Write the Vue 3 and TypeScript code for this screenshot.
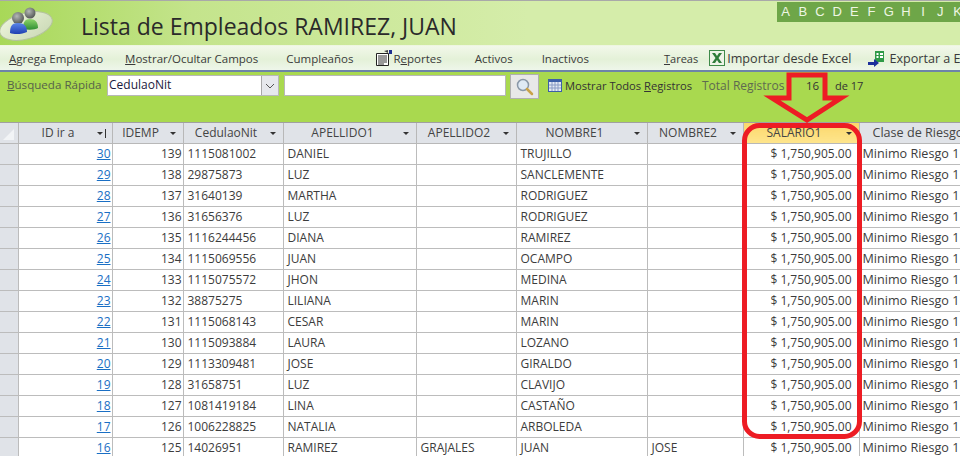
<script setup lang="ts">
interface Empleado {
  id: number
  idemp: number
  cedula: string
  apellido1: string
  apellido2: string
  nombre1: string
  nombre2: string
}

const letters = ['A', 'B', 'C', 'D', 'E', 'F', 'G', 'H', 'I', 'J', 'K']

const columns = [
  { label: 'ID ir a', width: 94, sorted: true },
  { label: 'IDEMP', width: 71 },
  { label: 'CedulaoNit', width: 100 },
  { label: 'APELLIDO1', width: 133 },
  { label: 'APELLIDO2', width: 100 },
  { label: 'NOMBRE1', width: 131 },
  { label: 'NOMBRE2', width: 96 },
  { label: 'SALARIO1', width: 116, active: true },
  { label: 'Clase de Riesgo', width: 130 },
]

const empleados: Empleado[] = [
  { id: 30, idemp: 139, cedula: '1115081002', apellido1: 'DANIEL', apellido2: '', nombre1: 'TRUJILLO', nombre2: '' },
  { id: 29, idemp: 138, cedula: '29875873', apellido1: 'LUZ', apellido2: '', nombre1: 'SANCLEMENTE', nombre2: '' },
  { id: 28, idemp: 137, cedula: '31640139', apellido1: 'MARTHA', apellido2: '', nombre1: 'RODRIGUEZ', nombre2: '' },
  { id: 27, idemp: 136, cedula: '31656376', apellido1: 'LUZ', apellido2: '', nombre1: 'RODRIGUEZ', nombre2: '' },
  { id: 26, idemp: 135, cedula: '1116244456', apellido1: 'DIANA', apellido2: '', nombre1: 'RAMIREZ', nombre2: '' },
  { id: 25, idemp: 134, cedula: '1115069556', apellido1: 'JUAN', apellido2: '', nombre1: 'OCAMPO', nombre2: '' },
  { id: 24, idemp: 133, cedula: '1115075572', apellido1: 'JHON', apellido2: '', nombre1: 'MEDINA', nombre2: '' },
  { id: 23, idemp: 132, cedula: '38875275', apellido1: 'LILIANA', apellido2: '', nombre1: 'MARIN', nombre2: '' },
  { id: 22, idemp: 131, cedula: '1115068143', apellido1: 'CESAR', apellido2: '', nombre1: 'MARIN', nombre2: '' },
  { id: 21, idemp: 130, cedula: '1115093884', apellido1: 'LAURA', apellido2: '', nombre1: 'LOZANO', nombre2: '' },
  { id: 20, idemp: 129, cedula: '1113309481', apellido1: 'JOSE', apellido2: '', nombre1: 'GIRALDO', nombre2: '' },
  { id: 19, idemp: 128, cedula: '31658751', apellido1: 'LUZ', apellido2: '', nombre1: 'CLAVIJO', nombre2: '' },
  { id: 18, idemp: 127, cedula: '1081419184', apellido1: 'LINA', apellido2: '', nombre1: 'CASTAÑO', nombre2: '' },
  { id: 17, idemp: 126, cedula: '1006228825', apellido1: 'NATALIA', apellido2: '', nombre1: 'ARBOLEDA', nombre2: '' },
  { id: 16, idemp: 125, cedula: '14026951', apellido1: 'RAMIREZ', apellido2: 'GRAJALES', nombre1: 'JUAN', nombre2: 'JOSE' },
]
</script>

<template>
  <div class="page">
    <header class="title-bar">
      <svg class="logo" width="54" height="42" viewBox="0 0 54 42">
        <defs>
          <linearGradient id="disc" x1="0" y1="0" x2="1" y2="1">
            <stop offset="0" stop-color="#eef5dd" />
            <stop offset="1" stop-color="#c9d8b4" />
          </linearGradient>
          <radialGradient id="head" cx="0.4" cy="0.35" r="0.7">
            <stop offset="0" stop-color="#b4b8b6" />
            <stop offset="1" stop-color="#4e5250" />
          </radialGradient>
          <linearGradient id="blue" x1="0" y1="0" x2="0" y2="1">
            <stop offset="0" stop-color="#5a86ea" />
            <stop offset="1" stop-color="#1f3fb0" />
          </linearGradient>
          <linearGradient id="green" x1="0" y1="0" x2="0" y2="1">
            <stop offset="0" stop-color="#8ed46a" />
            <stop offset="1" stop-color="#2f8f34" />
          </linearGradient>
        </defs>
        <ellipse cx="26" cy="23" rx="27" ry="13" transform="rotate(-15 26 23)" fill="url(#disc)" stroke="#b4c29e" />
        <circle cx="30" cy="10" r="5.500" fill="url(#head)" />
        <path d="M23 26c0-7 2-10 7-10s8 3 8 9c-3 2-10 2-15 1z" fill="url(#green)" />
        <circle cx="18" cy="15" r="6" fill="url(#head)" />
        <path d="M10 30c0-7 2-10 8-10s9 3 9 9c-4 2-12 3-17 1z" fill="url(#blue)" />
      </svg>
      <h1>Lista de Empleados RAMIREZ, JUAN</h1>
      <div class="letters">
        <span v-for="l in letters" :key="l">{{ l }}</span>
      </div>
    </header>

    <nav class="menu">
      <span class="m1"><u>A</u>grega Empleado</span>
      <span class="m2"><u>M</u>ostrar/Ocultar Campos</span>
      <span class="m3">Cumpleaños</span>
      <span class="m4">
        <svg width="16" height="16" viewBox="0 0 16 16">
          <path d="M.5 3.500h12v12H.5z" fill="#fff" stroke="#222" />
          <path d="M2 6h9M2 8h9M2 10h9M2 12h9M2 14h6" stroke="#333" />
          <path d="M13 0h3v4h-3z" fill="#1f2f8f" />
          <path d="M8 1l4-1v3z" fill="#444" />
        </svg>
        <span>R<u>e</u>portes</span>
      </span>
      <span class="m5">Activos</span>
      <span class="m6">Inactivos</span>
      <span class="m7"><u>T</u>areas</span>
      <span class="m8">
        <svg width="16" height="16" viewBox="0 0 16 16">
          <rect x="0.5" y="0.5" width="15" height="15" fill="#eef4e8" stroke="#3f8a4a" />
          <path d="M3 3h3l2 3 2-3h3l-3.500 5 3.500 5h-3l-2-3-2 3H3l3.500-5z" fill="#2f7d3b" />
        </svg>
        <span>Importar desde Excel</span>
      </span>
      <span class="m9">
        <svg width="17" height="17" viewBox="0 0 17 17">
          <path d="M7 1h9v11H7z" fill="#2f9a47" />
          <path d="M8.500 3h2v2h-2zM12 3h3v2h-3zM8.500 6h2v2h-2zM12 6h3v2h-3z" fill="#fff" />
          <path d="M0 12h6V9l5 4-5 4v-2H0z" fill="#1d2f9c" />
        </svg>
        <span>Exportar a Excel</span>
      </span>
    </nav>

    <section class="search">
      <label class="search-label"><u>B</u>úsqueda Rápida</label>
      <div class="combo">
        <span>CedulaoNit</span>
        <i class="combo-btn">
          <svg width="10" height="6" viewBox="0 0 10 6"><path d="M1 1l4 4 4-4" fill="none" stroke="#555" /></svg>
        </i>
      </div>
      <div class="search-input"></div>
      <button class="search-btn">
        <svg width="20" height="20" viewBox="0 0 20 20">
          <circle cx="8" cy="8" r="5.500" fill="#dfeaf5" stroke="#8a98a8" stroke-width="1.500" />
          <path d="M12 12l5 5" stroke="#c9a24a" stroke-width="2.500" stroke-linecap="round" />
        </svg>
      </button>
      <svg class="cal" width="14" height="13" viewBox="0 0 14 13">
        <rect width="14" height="13" fill="#3d5fa8" />
        <rect x="1" y="3" width="12" height="9" fill="#e4e9f4" />
        <path d="M1 6h12M1 9h12M4 3v9M7 3v9M10 3v9" stroke="#8a9bc4" />
      </svg>
      <span class="show-all">Mostrar Todos <u>R</u>egistros</span>
      <span class="total">Total Registros</span>
      <span class="count">16</span>
      <span class="of">de 17</span>
    </section>

    <table class="grid">
      <colgroup>
        <col style="width: 18px" />
        <col v-for="c in columns" :key="c.label" :style="{ width: c.width + 'px' }" />
      </colgroup>
      <thead>
        <tr>
          <th class="corner"><span class="tri"></span></th>
          <th v-for="c in columns" :key="c.label" :class="{ active: c.active, wide: c.label === 'Clase de Riesgo' }">
            <span class="th-label">{{ c.label }}</span>
            <i v-if="c.label !== 'Clase de Riesgo'" class="arrow" :class="{ sorted: c.sorted }"></i>
          </th>
        </tr>
      </thead>
      <tbody>
        <tr v-for="e in empleados" :key="e.id">
          <td class="sel"></td>
          <td class="num"><a>{{ e.id }}</a></td>
          <td class="num">{{ e.idemp }}</td>
          <td>{{ e.cedula }}</td>
          <td>{{ e.apellido1 }}</td>
          <td>{{ e.apellido2 }}</td>
          <td>{{ e.nombre1 }}</td>
          <td>{{ e.nombre2 }}</td>
          <td class="num money">$ 1,750,905.00</td>
          <td class="clip">Minimo Riesgo 1</td>
        </tr>
      </tbody>
    </table>

    <!-- marcas rojas pintadas encima de la captura -->
    <svg class="marks" width="960" height="456" viewBox="0 0 960 456">
      <path
        d="M789 75H825V98H841L807 120L772 98H789Z"
        fill="none"
        stroke="#ed1c24"
        stroke-width="5"
      />
      <rect x="744.500" y="125.500" width="115" height="311" rx="15" fill="none" stroke="#ed1c24" stroke-width="5" />
    </svg>
  </div>
</template>

<style scoped>
.page {
  position: relative;
  width: 960px;
  height: 456px;
  overflow: hidden;
  background: #fff;
  font-family: "Open Sans", "Noto Sans", sans-serif;
  font-size: 12px;
  color: #444;
}

.title-bar {
  height: 45px;
  box-sizing: border-box;
  border-top: 1px solid #a9a9a9;
  display: flex;
  align-items: flex-start;
  background: linear-gradient(90deg, #a8d858 0%, #c4e48c 20%, #d5edaa 55%, #d5edaa 100%);
}

.logo {
  margin-top: 2px;
  flex: none;
}

.title-bar h1 {
  margin: 8px 0 0 27px;
  font-size: 23px;
  font-weight: 400;
  line-height: 34px;
  color: #2a2a2a;
  white-space: nowrap;
}

.letters {
  margin: 1px 0 0 auto;
  width: 183px;
  height: 20px;
  flex: none;
  display: flex;
  background: #6ea648;
  color: #eef6e4;
  overflow: hidden;
  font-family: "Liberation Sans", Arial, sans-serif;
}

.letters span {
  width: 17.200px;
  flex: none;
  text-align: center;
  line-height: 20px;
  font-size: 13px;
}

.menu {
  height: 27px;
  display: flex;
  align-items: center;
  white-space: nowrap;
  border-top: 1px solid #eef6e0;
  border-bottom: 2px solid #6d84a8;
  box-sizing: border-box;
  background: linear-gradient(180deg, #f2f8ea 0%, #e4f1d8 55%, #eef6ea 100%);
  overflow: hidden;
  color: #3a3a3a;
  font-size: 11.500px;
}

.menu > span {
  display: inline-flex;
  align-items: center;
  flex: none;
}

.m1 { margin-left: 9px; }
.m2 { margin-left: 22px; }
.m3 { margin-left: 28px; }
.m4 { margin-left: 23px; gap: 1px; }
.m5 { margin-left: 33px; }
.m6 { margin-left: 29px; }
.m7 { margin-left: 75px; font-size: 11px; }
.m8 { margin-left: 11px; gap: 2px; font-size: 12.600px; }
.m9 { margin-left: 17px; gap: 4px; font-size: 12.600px; }

.search {
  height: 51px;
  box-sizing: border-box;
  padding-top: 3px;
  display: flex;
  align-items: flex-start;
  background: #a9d94f;
  border-bottom: 1px solid #a0a0a0;
  white-space: nowrap;
}

.search-label {
  margin: 2px 0 0 7px;
  width: 100px;
  flex: none;
  color: #56624a;
  font-size: 11.600px;
}

.combo {
  width: 172px;
  height: 21px;
  flex: none;
  box-sizing: border-box;
  background: #fff;
  border: 1px solid #b8b8b8;
  position: relative;
  color: #1a1a40;
  padding-left: 1px;
  line-height: 17px;
}

.combo-btn {
  position: absolute;
  right: 0;
  top: 0;
  width: 16px;
  height: 19px;
  background: #e6e8ec;
  border-left: 1px solid #a8a8a8;
  display: flex;
  align-items: center;
  justify-content: center;
}

.search-input {
  margin-left: 5px;
  width: 222px;
  height: 21px;
  flex: none;
  box-sizing: border-box;
  background: #fff;
  border: 1px solid #b8b8b8;
}

.search-btn {
  margin: -1px 0 0 4px;
  width: 29px;
  height: 25px;
  flex: none;
  padding: 0;
  box-sizing: border-box;
  background: #e8e8e8;
  border: 1px solid #b0b0b0;
  display: flex;
  align-items: center;
  justify-content: center;
}

.cal {
  margin: 4px 0 0 9px;
  flex: none;
}

.show-all {
  margin: 3px 0 0 3px;
  width: 127px;
  flex: none;
  color: #333;
  font-size: 11.200px;
}

.total {
  margin: 2px 0 0 10px;
  width: 85px;
  flex: none;
  color: #5e6a50;
}

.count {
  margin: 3px 0 0 19px;
  width: 29px;
  flex: none;
  color: #333;
  font-size: 11.500px;
}

.of {
  margin: 3px 0 0 0;
  color: #333;
  font-size: 11px;
}

.grid {
  border-collapse: collapse;
  table-layout: fixed;
  width: 989px;
  line-height: 20px;
}

.grid th {
  height: 19px;
  padding: 0 14px 0 0;
  position: relative;
  background: #e0e3e8;
  border: 1px solid #b8b8b8;
  border-top: 0;
  font-weight: 400;
  text-align: center;
  color: #444;
  white-space: nowrap;
  overflow: hidden;
}

.grid th.active {
  background: linear-gradient(180deg, #fbd76b 0%, #fee58c 100%);
}

.grid th.wide {
  font-size: 12.600px;
  padding: 0 0 0 13px;
  text-align: left;
}

.grid th:first-child {
  border-left: 0;
  padding: 0;
}

.tri {
  position: absolute;
  left: 3px;
  bottom: 3px;
  width: 0;
  height: 0;
  border-style: solid;
  border-width: 0 0 11px 11px;
  border-color: transparent transparent #f2f4f6 transparent;
}

.arrow {
  position: absolute;
  right: 7px;
  top: 9px;
  width: 0;
  height: 0;
  border-style: solid;
  border-width: 3px 3px 0 3px;
  border-color: #333 transparent transparent transparent;
}

.arrow.sorted {
  right: 9px;
}

.arrow.sorted::after {
  content: "";
  position: absolute;
  left: 5px;
  top: -6px;
  width: 1px;
  height: 9px;
  background: #333;
}

.grid td {
  height: 20px;
  padding: 0 2px 0 4px;
  border: 1px solid #bcbcbc;
  border-top: 0;
  white-space: nowrap;
  overflow: hidden;
  background: #fff;
  color: #3c3c3c;
}

.grid td.num {
  text-align: right;
  padding: 0 1px 0 0;
}

.grid td.money {
  padding-right: 7px;
}

.grid td.sel {
  background: #e0e3e8;
  border-left: 0;
  padding: 0;
}

.grid td.clip {
  padding-left: 3px;
  font-size: 12.600px;
}

.grid a {
  color: #1a6fc4;
  text-decoration: underline;
}

.marks {
  position: absolute;
  left: 0;
  top: 0;
  pointer-events: none;
}
</style>
